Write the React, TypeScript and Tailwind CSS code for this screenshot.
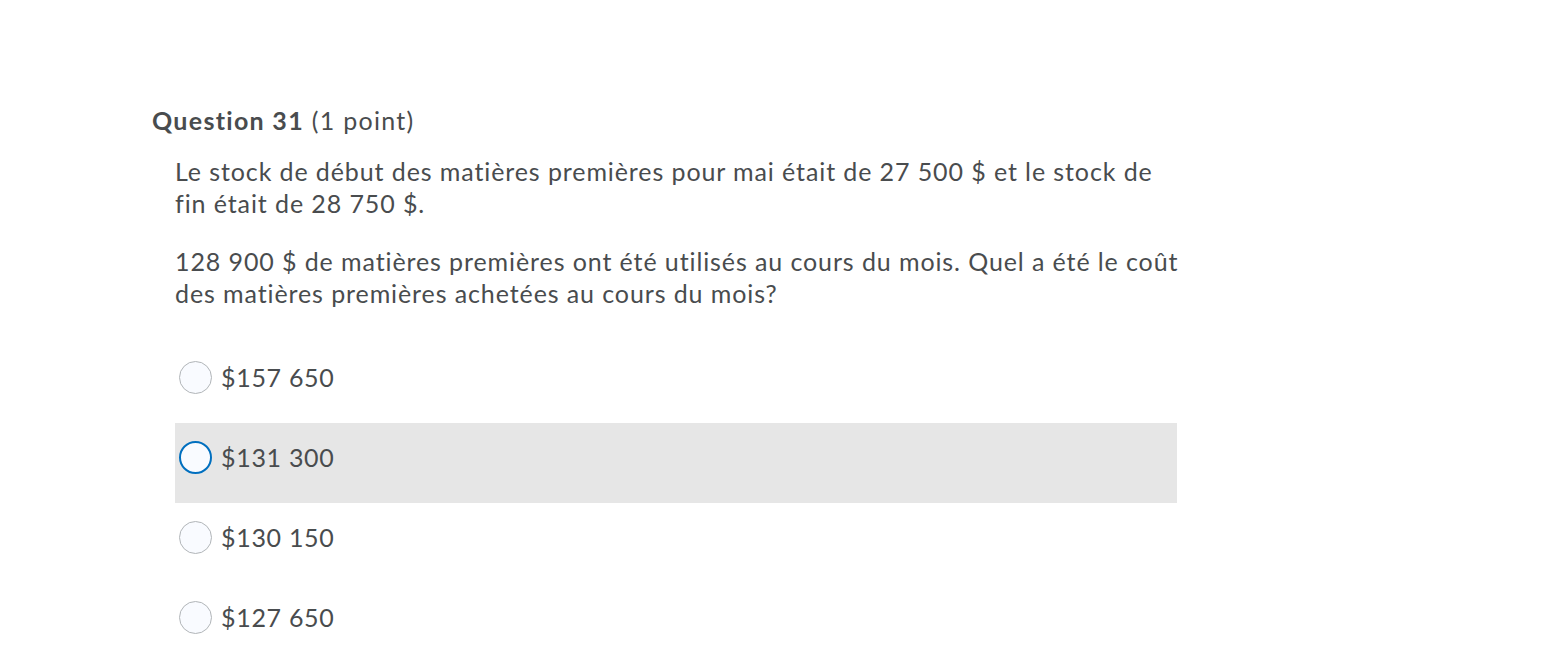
import React, { useState } from 'react';

const options = ['$157 650', '$131 300', '$130 150', '$127 650'];

export default function App() {
  const [hover] = useState(1);

  return (
    <div className="min-h-screen bg-white text-[#494c4e]" style={{ fontFamily: 'Lato, "Open Sans", sans-serif' }}>
      <div className="pl-[152px] pt-[104px]">
        <h2 className="text-[25px] leading-[32px] tracking-[1.3px]">
          <span className="font-bold">Question 31</span> (1 point)
        </h2>
        <div className="ml-[23px] mt-[19px] text-[25px] leading-[32px]">
          <div className="w-[1005px] tracking-[0.9px]">
            <p>
              Le stock de début des matières premières pour mai était de 27 500 $ et le stock de fin était de 28 750 $.
            </p>
            <p className="mt-[26px]">
              128 900 $ de matières premières ont été utilisés au cours du mois. Quel a été le coût des matières premières achetées au cours du mois?
            </p>
          </div>
          <div className="w-[1002px] mt-[34px] flex flex-col tracking-[0.7px]">
            {options.map((o, i) => (
              <label
                key={o}
                className={`flex items-start h-[80px] pt-[18px] pl-[4px] ${i === hover ? 'bg-[#e6e6e6]' : ''}`}
              >
                <span
                  className={`w-[33px] h-[33px] rounded-full bg-[#f9fbff] shrink-0 ${
                    i === hover ? 'border-2 border-[#006fbf]' : 'border border-[#b1b5b8]'
                  }`}
                />
                <span className="ml-[9px] leading-[32px]">{o}</span>
              </label>
            ))}
          </div>
        </div>
      </div>
    </div>
  );
}
